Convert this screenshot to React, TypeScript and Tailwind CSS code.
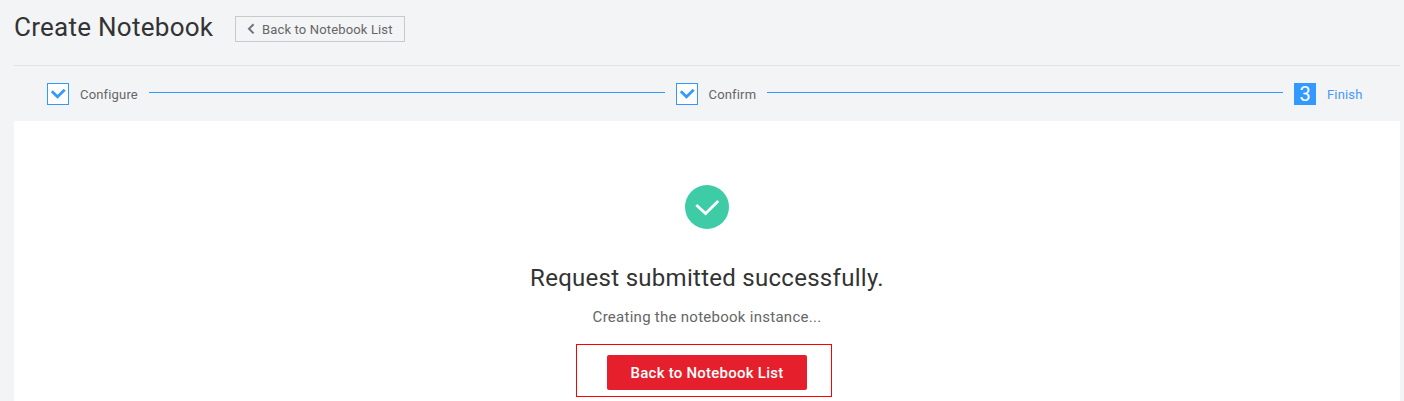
import React from "react";

function CheckBox() {
  return (
    <span className="mt-[17px] h-[22px] w-[22px] shrink-0 border border-[#3399ff] bg-white">
      <svg width="20" height="20" viewBox="0 0 20 20" fill="none">
        <path d="M3.8 7.2 L9.5 12.8 L16.7 5.7" stroke="#3399ff" strokeWidth="2.7" />
      </svg>
    </span>
  );
}

function Connector() {
  return <div className="mt-[26px] h-px w-[516px] shrink-0 bg-[#3399ff]" />;
}

export default function App() {
  return (
    <div className="flex h-[401px] w-[1404px] flex-col overflow-hidden bg-[#f3f4f6] pr-1 pl-[14px] font-['Roboto',sans-serif] text-[#666666]">
      <header className="flex h-[66px] shrink-0 items-start border-b border-[#dfe1e4]">
        <h1 className="mt-[7px] w-[221px] text-[26px] leading-[40px] tracking-[0.27px] whitespace-nowrap text-[#333333]">
          Create Notebook
        </h1>
        <button className="mt-4 flex h-[26px] w-[170px] items-center border border-[#c8cacd] pl-[11px]">
          <svg width="8" height="12" viewBox="0 0 8 12" fill="none" className="-mt-px mr-[7px] shrink-0">
            <path d="M6.6 1.2 L2 5.8 L6.6 10.4" stroke="#6f7480" strokeWidth="2" />
          </svg>
          <span className="pt-[2px] text-[13px] leading-[24px] tracking-[0.15px] whitespace-nowrap">
            Back to Notebook List
          </span>
        </button>
      </header>

      <nav className="flex h-[55px] shrink-0 items-start pl-[33px] text-[13px] leading-[20px] tracking-[0.17px]">
        <CheckBox />
        <span className="mt-[19px] ml-[11px] w-[69px]">Configure</span>
        <Connector />
        <span className="w-[11px] shrink-0" />
        <CheckBox />
        <span className="mt-[19px] ml-[10.5px] w-[58.5px]">Confirm</span>
        <Connector />
        <span className="mt-[17px] ml-[11px] h-[22px] w-[22px] shrink-0 bg-[#3399ff] text-center text-[20px] leading-[22px] tracking-normal text-white">
          3
        </span>
        <span className="mt-[19px] ml-[11px] text-[#4a97fa]">Finish</span>
      </nav>

      <main className="flex grow flex-col items-center bg-white pt-[63px]">
        <svg width="46" height="46" viewBox="0 0 46 46" fill="none" className="shrink-0">
          <circle cx="23" cy="23" r="22" fill="#3dcca6" />
          <path d="M12.3 20.9 L21.6 29.6 L34.2 17" stroke="#ffffff" strokeWidth="2.8" />
        </svg>
        <h2 className="mt-[30px] text-[24px] leading-[36px] tracking-[0.28px] whitespace-nowrap text-[#333333]">
          Request submitted successfully.
        </h2>
        <p className="mt-[11px] text-[15px] leading-[20px] tracking-[0.27px] whitespace-nowrap">
          Creating the notebook instance...
        </p>
        <div className="mt-[17px] mr-[6px] flex h-[53px] w-[256px] shrink-0 border border-[#ff0000] pt-[10px] pl-[30px]">
          <button className="h-[35px] w-[200px] rounded-[2px] bg-[#e51f2b] pt-px text-[15px] leading-[34px] font-medium tracking-[0.24px] whitespace-nowrap text-white">
            Back to Notebook List
          </button>
        </div>
      </main>
    </div>
  );
}
